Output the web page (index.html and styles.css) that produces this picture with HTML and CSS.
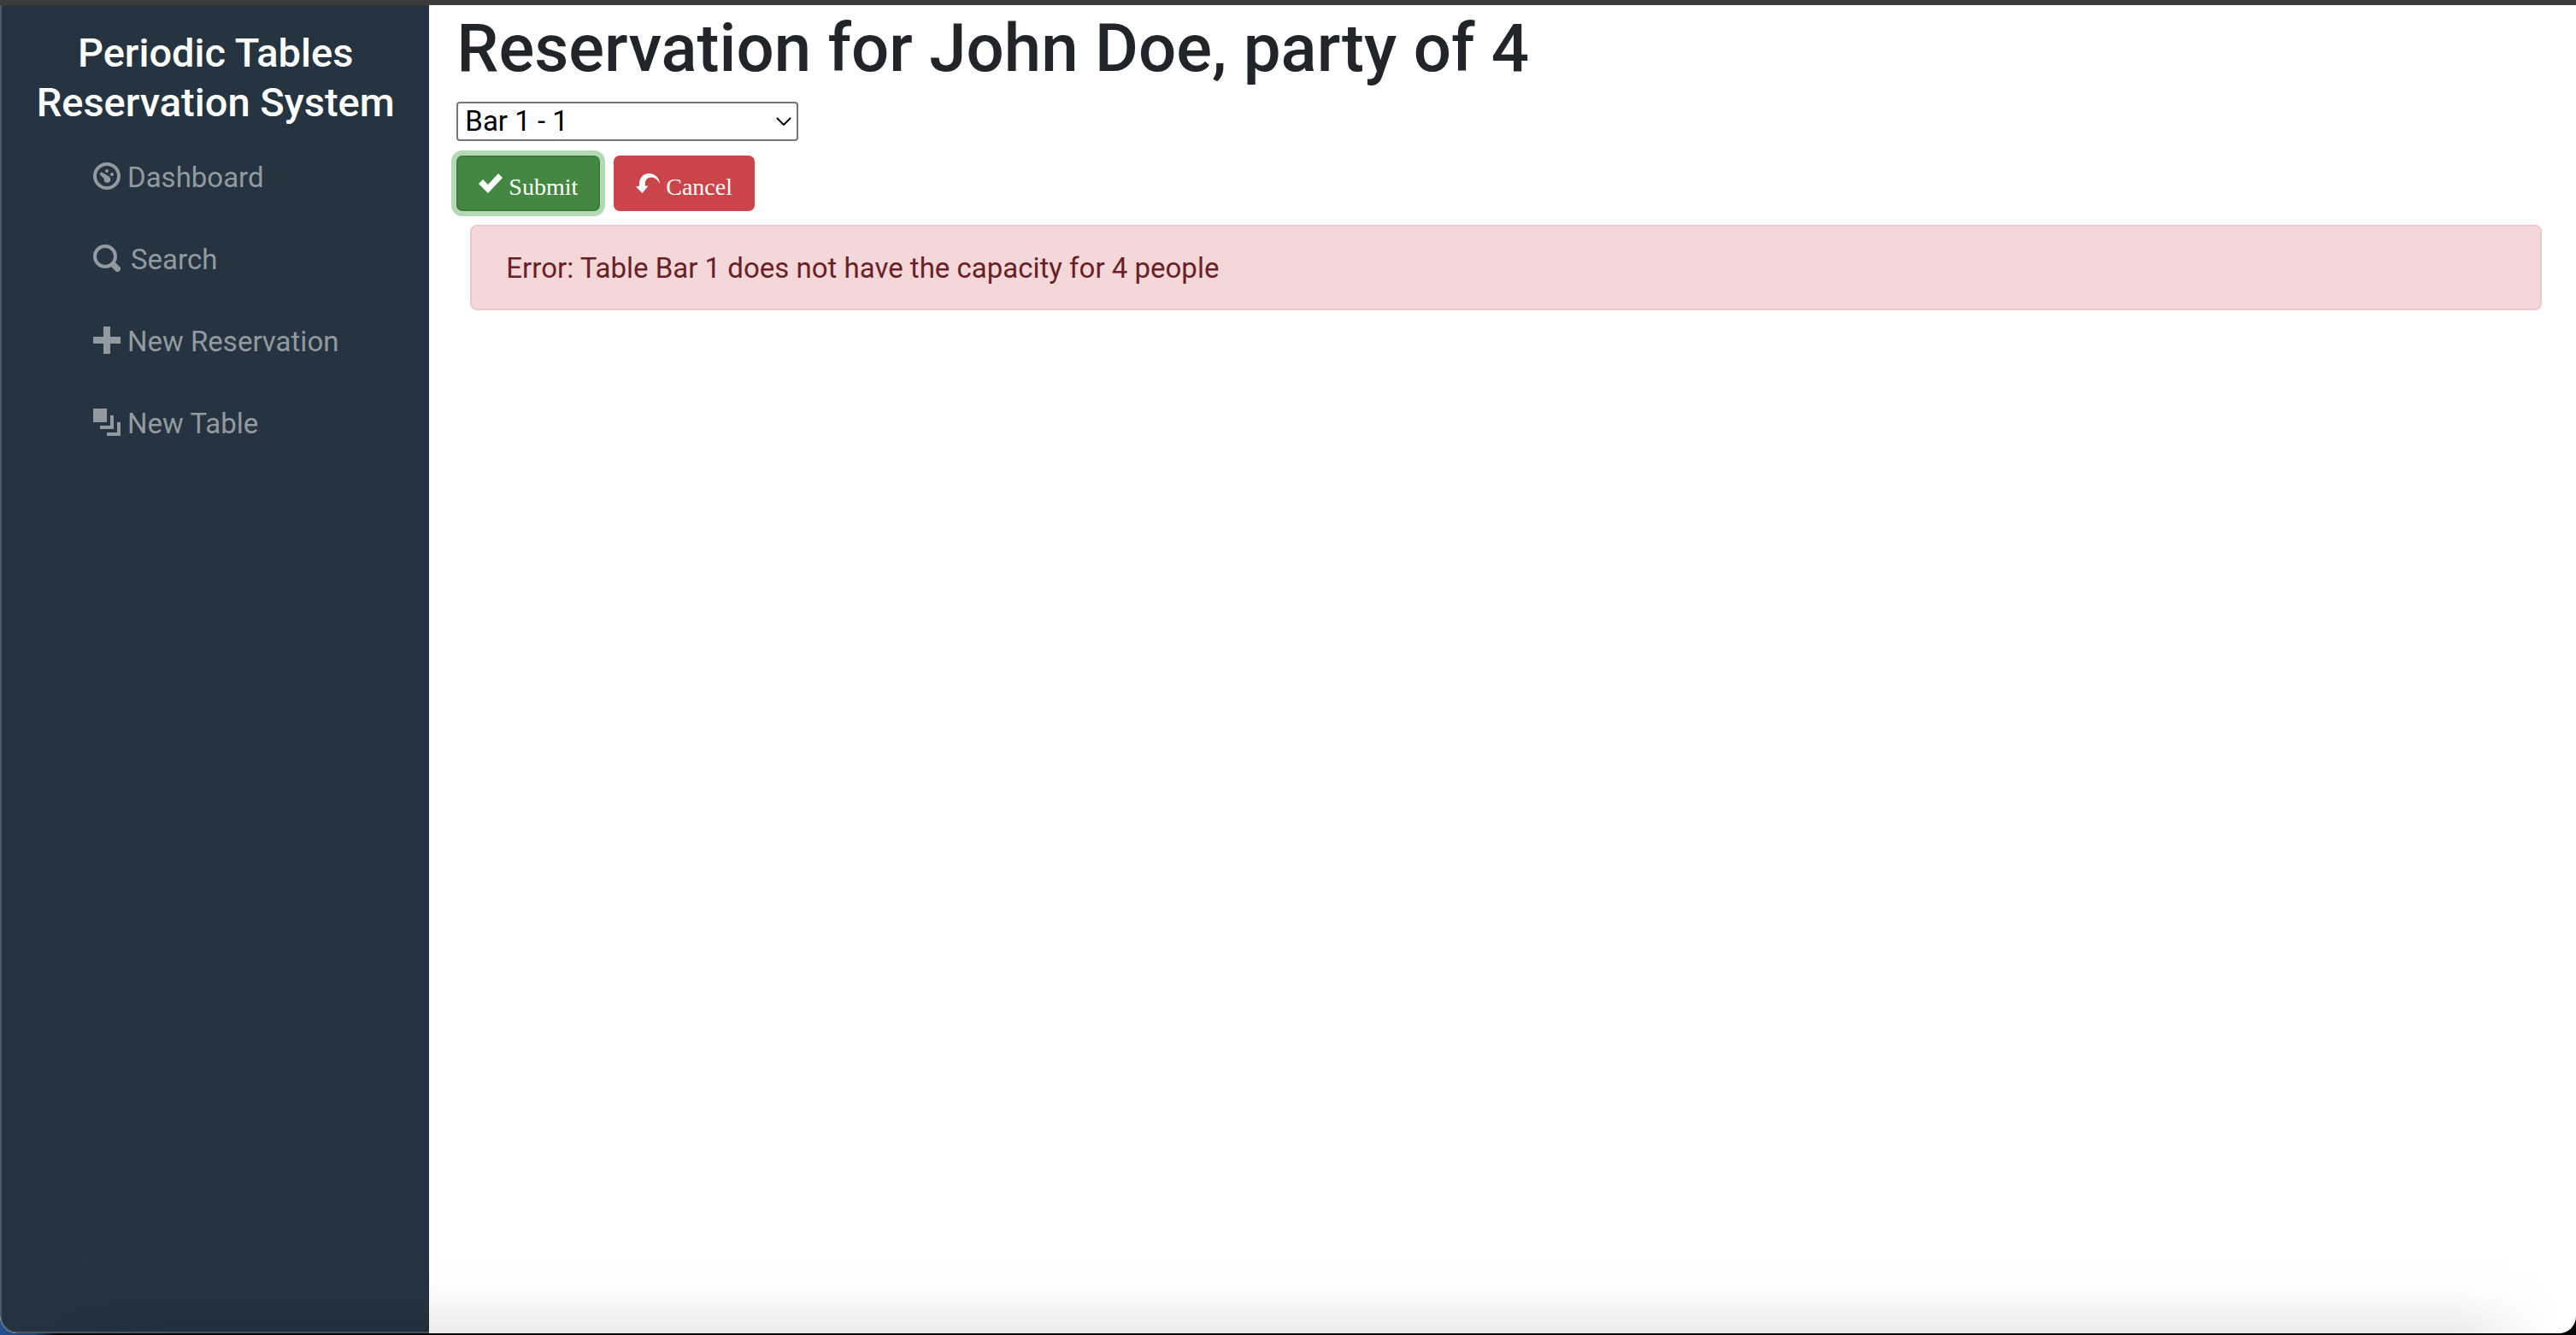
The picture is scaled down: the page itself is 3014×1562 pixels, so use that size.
FILE: index.html
```html
<!DOCTYPE html>
<html lang="en">
<head>
<meta charset="utf-8">
<title>Periodic Tables Reservation System</title>
<link rel="stylesheet" href="styles.css">
</head>
<body>
<div class="window">
  <nav class="sidebar">
    <a class="brand" href="#">Periodic Tables Reservation System</a>
    <ul class="menu">
      <li><a class="menu-link" href="#">
        <svg class="menu-icon" viewBox="0 0 32 32"><circle cx="16" cy="16" r="14" fill="none" stroke="currentColor" stroke-width="4"/><circle cx="16" cy="10" r="2"/><circle cx="22" cy="14" r="2"/><path d="M8 13.500c0-1.500 1.500-2.500 2.800-1.600L18 16c2 1 3 4 1.800 6.200-1.500 2.300-5.500 2-6.700-.3-.5-1-.6-2-.3-3L8.500 15z"/></svg>
        <span>Dashboard</span></a></li>
      <li><a class="menu-link search" href="#">
        <svg class="menu-icon" viewBox="0 0 32 32" fill="none" stroke="currentColor"><circle cx="14" cy="14" r="12" stroke-width="4"/><path d="M23.500 23.500l5 5" stroke-width="7" stroke-linecap="round"/></svg>
        <span>Search</span></a></li>
      <li><a class="menu-link" href="#">
        <svg class="menu-icon" viewBox="0 0 32 32"><path d="M12 0h8v12h12v8H20v12h-8V20H0v-8h12z"/></svg>
        <span>New Reservation</span></a></li>
      <li><a class="menu-link" href="#">
        <svg class="menu-icon" viewBox="0 0 32 32"><path d="M0 0h16v16H0zM20 8h4v16H8v-4h12zM28 16h4v16H16v-4h12z"/></svg>
        <span>New Table</span></a></li>
    </ul>
  </nav>
  <main class="content">
    <h1>Reservation for John Doe, party of 4</h1>
    <form>
      <div class="select-wrap">
        <select aria-label="Table"><option>Bar 1 - 1</option></select>
        <svg class="chevron" viewBox="0 0 18 10"><path d="M1 1l8 8 8-8" fill="none" stroke="#000" stroke-width="2"/></svg>
      </div>
      <div class="actions">
        <button class="btn submit" type="submit">
          <svg class="btn-icon" viewBox="0 0 28 28"><path d="M0 14l5-5 6 6L23 2l5 5-17 18z"/></svg>
          <span>Submit</span></button>
        <button class="btn cancel" type="button">
          <svg class="btn-icon" viewBox="0 0 28 28"><path d="M0 17.500l4-1C3.500 8 8 2 15 2c7 0 12.500 5 13 12-2.500-5-6-7.500-10-7.500-5 0-8 4-7 10h3.500L7.500 25z"/></svg>
          <span>Cancel</span></button>
      </div>
    </form>
    <div class="alert" role="alert">Error: Table Bar 1 does not have the capacity for 4 people</div>
  </main>
</div>
</body>
</html>
```
FILE: styles.css
```css
* { box-sizing: border-box; }
body {
  margin: 0;
  min-height: 100vh;
  display: flex;
  padding-bottom: 2px;
  background: linear-gradient(90deg, #24508f 0, #1c4276 40px, #050607 66px);
  font: 33px/48px Roboto, "Liberation Sans", sans-serif;
  color: #212529;
}
.window {
  position: relative;
  flex: 1;
  display: flex;
  border-top: 6px solid #3b3b3b;
  border-radius: 0 0 20px 20px;
  background: #fff;
  overflow: hidden;
}
/* soft shade along the bottom edge of the window */
.window::after {
  content: "";
  position: absolute;
  inset: auto 0 0 0;
  height: 90px;
  background: linear-gradient(transparent, rgba(0, 0, 0, .01) 45%, rgba(0, 0, 0, .08));
  mask-image: linear-gradient(90deg, transparent, #000 200px, #000 calc(100% - 140px), transparent calc(100% - 20px));
  pointer-events: none;
}
.sidebar {
  flex: 0 0 16.6667%;
  padding: 27px 32px 0;
  background: #253440;
  border: solid #4c5963;
  border-width: 0 0 2px 2px;
  border-bottom-left-radius: 20px;
}
.brand {
  display: block;
  font-size: 47px;
  font-weight: 500;
  line-height: 58px;
  text-align: center;
  color: #fff;
  text-decoration: none;
}
.menu { list-style: none; margin: 11px 0 0; padding: 0 0 0 75px; }
.menu-link {
  display: flex;
  align-items: center;
  gap: 8px;
  padding: 24px 0;
  color: #92999f;
  text-decoration: none;
  white-space: nowrap;
}
.menu-link.search { gap: 12px; }
.menu-icon { width: 32px; height: 32px; margin-bottom: 4px; fill: currentColor; }
.search .menu-icon { fill: none; }
.content { flex: 1; padding: 0 24px 0 32px; }
h1 { margin: 0 0 16px; padding-top: 5px; font-size: 78px; font-weight: 500; line-height: 92px; }
.select-wrap { position: relative; width: 400px; }
select {
  display: block;
  appearance: none;
  width: 100%;
  height: 46px;
  padding: 0 8px;
  border: 2px solid #767676;
  border-radius: 4px;
  background: #fff;
  color: #000;
  font: inherit;
  line-height: 40px;
}
.chevron { position: absolute; right: 8px; top: 18px; width: 18px; height: 10px; }
.actions { display: flex; gap: 16px; margin: 17px 0 16px; }
.btn {
  display: flex;
  align-items: center;
  gap: 7px;
  height: 65px;
  padding: 0 24px;
  border: 2px solid;
  border-radius: 7px;
  color: #fff;
  font: 28px/32px "Liberation Serif", serif;
}
.btn span { padding-top: 8px; }
.btn-icon { width: 28px; height: 28px; fill: currentColor; }
.submit { background: #448742; border-color: #3d7a3b; box-shadow: 0 0 0 6px #b4dab5; }
.cancel { background: #cb444a; border-color: #cb444a; }
.alert {
  margin: 0 16px;
  padding: 25px 40px 23px;
  border: 2px solid #efc7ca;
  border-radius: 8px;
  background: #f3d7d9;
  color: #6a2027;
}
```
